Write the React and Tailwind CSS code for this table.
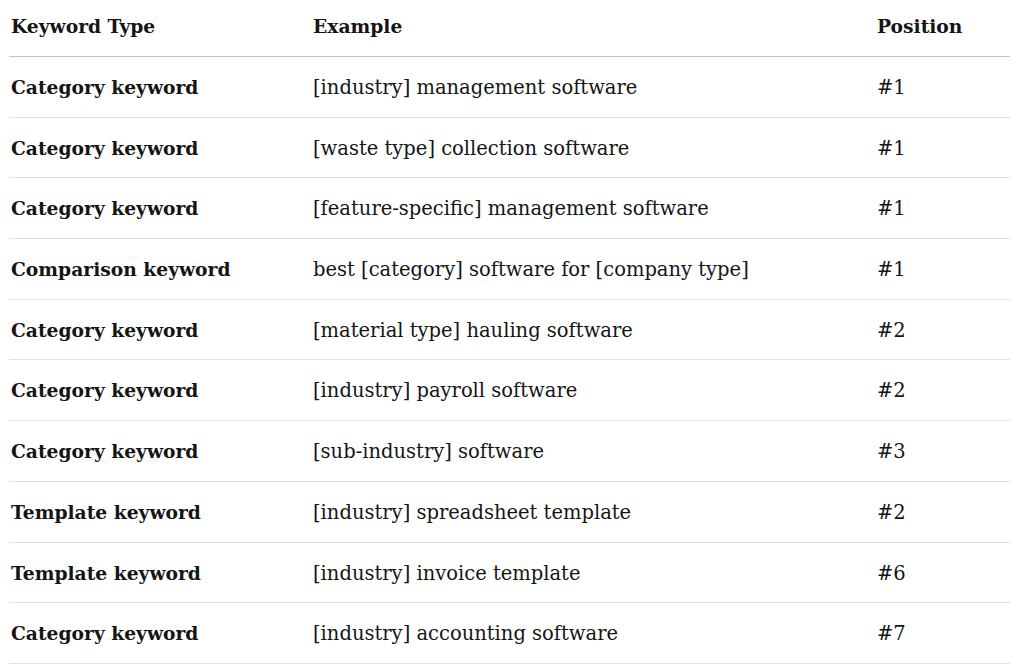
const rows = [
  ['Category keyword', '[industry] management software', '#1'],
  ['Category keyword', '[waste type] collection software', '#1'],
  ['Category keyword', '[feature-specific] management software', '#1'],
  ['Comparison keyword', 'best [category] software for [company type]', '#1'],
  ['Category keyword', '[material type] hauling software', '#2'],
  ['Category keyword', '[industry] payroll software', '#2'],
  ['Category keyword', '[sub-industry] software', '#3'],
  ['Template keyword', '[industry] spreadsheet template', '#2'],
  ['Template keyword', '[industry] invoice template', '#6'],
  ['Category keyword', '[industry] accounting software', '#7'],
]

export default function App() {
  return (
    <div className="w-[1024px] h-[668px] bg-white overflow-hidden text-[#151515] text-[19.5px] leading-[24px] font-['DejaVu_Serif',serif]">
      <div className="ml-[9px] w-[1001px]">
        <div className="grid grid-cols-[304px_564px_1fr] h-[57px] items-baseline border-b border-[#c4c4c4] font-bold text-[18.7px] pt-[14px]">
          <div className="pl-[2px]">Keyword Type</div>
          <div>Example</div>
          <div>Position</div>
        </div>
        {rows.map((r, i) => (
          <div key={i} className="grid grid-cols-[304px_564px_1fr] h-[60.7px] items-baseline border-b border-[#e2e2e2] pt-[18px]">
            <div className="pl-[2px] font-bold text-[18.7px]">{r[0]}</div>
            <div>{r[1]}</div>
            <div>{r[2]}</div>
          </div>
        ))}
      </div>
    </div>
  )
}
